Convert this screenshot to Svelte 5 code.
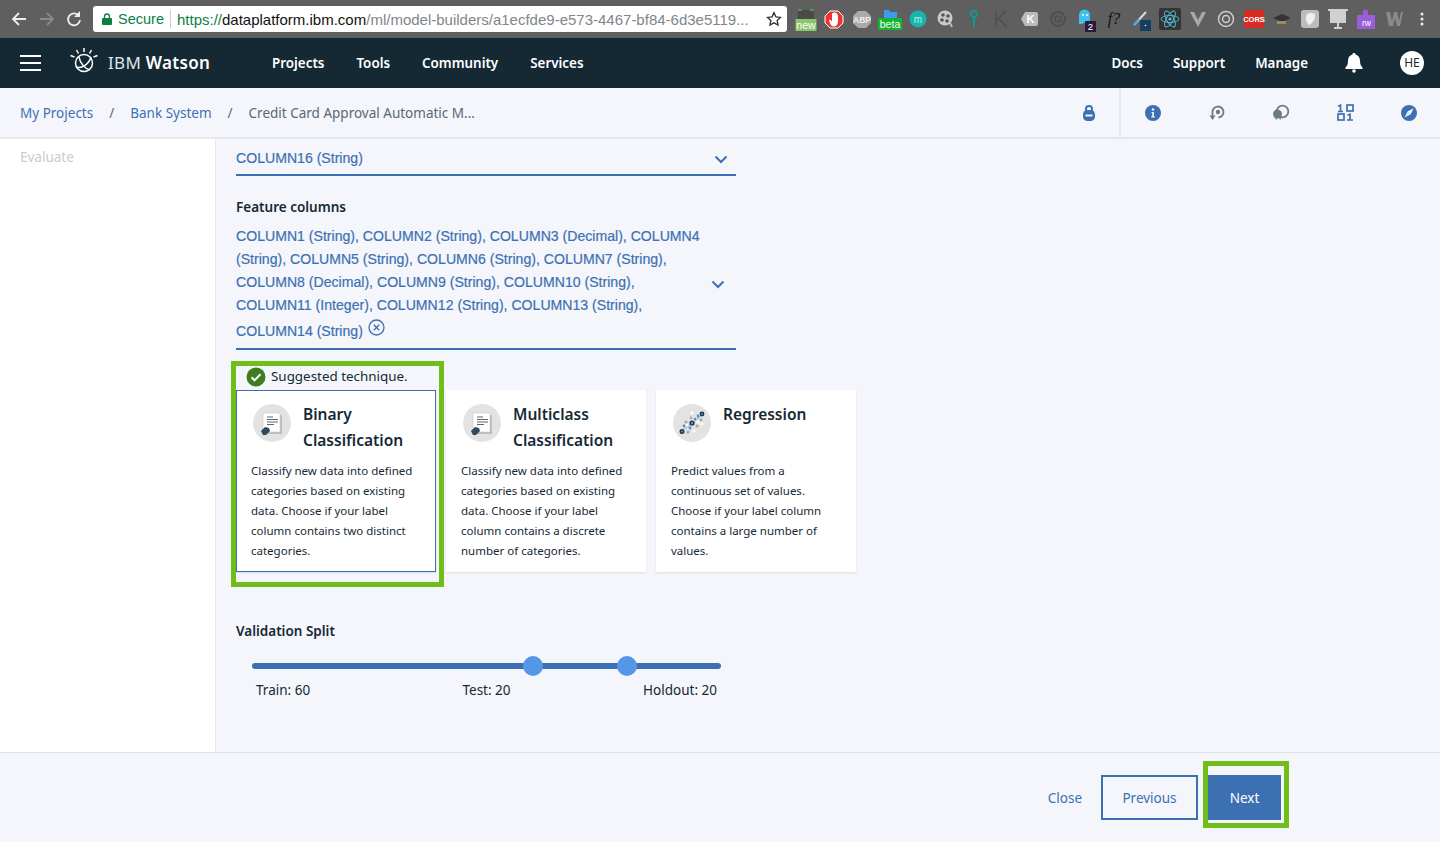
<script>
	const extensions = ["new", "stop", "abp", "beta", "m", "film", "key", "kdark", "k", "swirl", "ghost", "fx", "pen", "react", "v", "target", "cors", "hat", "shield", "screen", "rw", "w", "dots"];
	const navLeft = ["Projects", "Tools", "Community", "Services"];
	const navRight = ["Docs", "Support", "Manage"];
	const features = [
		"COLUMN1 (String), COLUMN2 (String), COLUMN3 (Decimal), COLUMN4",
		"(String), COLUMN5 (String), COLUMN6 (String), COLUMN7 (String),",
		"COLUMN8 (Decimal), COLUMN9 (String), COLUMN10 (String),",
		"COLUMN11 (Integer), COLUMN12 (String), COLUMN13 (String),"
	];
	const cards = [
		{ title: ["Binary", "Classification"], icon: "doc", selected: true, lines: ["Classify new data into defined", "categories based on existing", "data. Choose if your label", "column contains two distinct", "categories."] },
		{ title: ["Multiclass", "Classification"], icon: "doc", lines: ["Classify new data into defined", "categories based on existing", "data. Choose if your label", "column contains a discrete", "number of categories."] },
		{ title: ["Regression"], icon: "scatter", lines: ["Predict values from a", "continuous set of values.", "Choose if your label column", "contains a large number of", "values."] }
	];
</script>

<div class="page">
	<div class="chrome">
		<div class="arrows">
			<svg width="28" height="28" viewBox="0 0 28 28"><path d="M24 14H12M17 8l-6 6 6 6" transform="translate(-2 0)" fill="none" stroke="#eee" stroke-width="1.8"/></svg>
			<svg width="28" height="28" viewBox="0 0 28 28"><path d="M4 14h12M11 8l6 6-6 6" transform="translate(4 0)" fill="none" stroke="#8a8a8a" stroke-width="1.8"/></svg>
			<svg width="28" height="28" viewBox="0 0 28 28"><path d="M19 11a6 6 0 1 0 1 4" fill="none" stroke="#eee" stroke-width="1.8"/><path d="M20 6v6h-6z" fill="#eee"/></svg>
		</div>
		<div class="omnibox">
			<svg class="lock" width="10" height="12" viewBox="0 0 10 12"><path d="M2.5 5V3.5a2.5 2.5 0 0 1 5 0V5" fill="none" stroke="#0b8043" stroke-width="1.3"/><rect y="5" width="10" height="7" rx="1" fill="#0b8043"/></svg>
			<span class="secure">Secure</span>
			<span class="omni-sep"></span>
			<span class="url"><span class="green">https://</span><span class="dark">dataplatform.ibm.com</span>/ml/model-builders/a1ecfde9-e573-4467-bf84-6d3e5119...</span>
			<svg class="star" width="16" height="16" viewBox="0 0 24 24"><path d="M12 2.5l2.9 6.3 6.9.8-5.1 4.7 1.4 6.8-6.1-3.4-6.1 3.4 1.4-6.8L2.2 9.600l6.900-.8z" fill="none" stroke="#333" stroke-width="2"/></svg>
		</div>
		<div class="extensions">
			{#each extensions as e}
				<div class="ext">
					<svg width="28" height="28" viewBox="0 0 28 28">
						{#if e === "new"}
							<path d="M6 5h16v9H6z" fill="#4a4a4a"/><path d="M6 5h4M18 5h4" stroke="#4caf50" stroke-width="1.400"/>
							<rect x="3.500" y="14" width="21" height="12" fill="#8cc66e"/><text x="14" y="24" class="t" font-size="10.500" fill="#fff">new</text>
						{:else if e === "stop"}
							<path d="M10 6h8l5 5v7l-5 5h-8l-5-5v-7z" fill="#e33" stroke="#fff" stroke-width="1"/><path d="M14 7.500c3 0 4 2 4 4v5c0 3-2 5-4 5-3 0-4-3-5-6l1-1 2 2v-8z" fill="#fff"/>
						{:else if e === "abp"}
							<path d="M10 6h8l5 5v7l-5 5h-8l-5-5v-7z" fill="#aaa"/><text x="14" y="18" class="t" font-size="8.500" font-weight="700" fill="#eee">ABP</text>
						{:else if e === "beta"}
							<path d="M8 5h5l1 2h7v6H8z" fill="#3d9be9"/>
							<rect x="2" y="13" width="24" height="12" fill="#12b52c"/><text x="14" y="23" class="t" font-size="10.500" fill="#fff">beta</text>
						{:else if e === "m"}
							<circle cx="14" cy="14" r="8.500" fill="#19b5ac"/><text x="14" y="17.500" class="t" font-size="10" fill="#bdeeea">m</text>
						{:else if e === "film"}
							<circle cx="13" cy="13" r="7.500" fill="#c9c9c9"/><circle cx="11" cy="10" r="1.800" fill="#555"/><circle cx="16" cy="11" r="1.800" fill="#555"/><circle cx="10" cy="15" r="1.800" fill="#555"/><circle cx="15" cy="16" r="1.800" fill="#555"/><path d="M18 18l2 4" stroke="#bbb" stroke-width="2"/>
						{:else if e === "key"}
							<circle cx="14" cy="9" r="3.200" fill="none" stroke="#119a8b" stroke-width="2"/><path d="M14 12v10" stroke="#119a8b" stroke-width="2"/>
						{:else if e === "kdark"}
							<path d="M8 6v16M9 15l9-9M10 13l9 9" fill="none" stroke="#525252" stroke-width="2"/>
						{:else if e === "k"}
							<path d="M9 7h11a2 2 0 0 1 2 2v10a2 2 0 0 1-2 2H9l-4-7z" fill="#bbb"/><text x="14.500" y="18" class="t" font-size="11" font-weight="700" fill="#fff">K</text>
						{:else if e === "swirl"}
							<circle cx="14" cy="14" r="7" fill="none" stroke="#4e4e4e" stroke-width="1.800"/><circle cx="14" cy="14" r="3" fill="none" stroke="#4e4e4e" stroke-width="1.300"/><path d="M7 8l14 12" stroke="#4e4e4e"/>
						{:else if e === "ghost"}
							<path d="M7 19V10a5.500 5.500 0 0 1 11 0v9l-2-1.500-2 1.500-2-1.500-2 1.500z" fill="#3ec3ee"/><circle cx="11" cy="10" r="1" fill="#fff"/><circle cx="15" cy="10" r="1" fill="#fff"/>
							<rect x="13" y="16" width="11" height="11" fill="#2b1a3e"/><text x="18.500" y="25" class="t" font-size="9.500" fill="#fff">2</text>
						{:else if e === "fx"}
							<text x="14" y="19" class="i" font-size="16" fill="#111">f?</text>
						{:else if e === "pen"}
							<path d="M6 20L18 7" stroke="#ddd" stroke-width="2"/><path d="M6 20l5-6" stroke="#4aa3df" stroke-width="2"/>
							<rect x="12" y="15" width="11" height="11" fill="#11415f"/><circle cx="17.500" cy="20.500" r=".8" fill="#fff"/>
						{:else if e === "react"}
							<rect x="3" y="3" width="22" height="22" rx="2" fill="#333"/><g fill="none" stroke="#53c1de" stroke-width=".9"><ellipse cx="14" cy="14" rx="9" ry="3.500"/><ellipse cx="14" cy="14" rx="9" ry="3.500" transform="rotate(60 14 14)"/><ellipse cx="14" cy="14" rx="9" ry="3.500" transform="rotate(120 14 14)"/></g><circle cx="14" cy="14" r="1.600" fill="#53c1de"/>
						{:else if e === "v"}
							<path d="M6 7h4l4 8 4-8h4l-8 15z" fill="#a8a8a8"/>
						{:else if e === "target"}
							<circle cx="14" cy="14" r="7.500" fill="none" stroke="#ccc" stroke-width="1.500"/><circle cx="14" cy="14" r="3.500" fill="none" stroke="#ccc" stroke-width="1.500"/>
						{:else if e === "cors"}
							<rect x="4" y="5" width="20" height="18" rx="2" fill="#d62b22"/><text x="14" y="17" class="t" font-size="7.500" font-weight="700" fill="#fff">CORS</text>
						{:else if e === "hat"}
							<path d="M14 9l9 4-9 4-9-4z" fill="#333"/><path d="M9 16v3h9v-3" fill="#a08a55"/>
						{:else if e === "shield"}
							<rect x="5" y="5" width="18" height="18" rx="3" fill="#bdbdbd"/><path d="M14 8c3 0 5 1 5 1 0 6-2 9-6 11-2-2-4-6-3-9 1-2 2-3 4-3z" fill="#f0f0f0"/>
						{:else if e === "screen"}
							<path d="M6 5h16v13H6z" fill="#d0d0d0"/><path d="M4 5h20" stroke="#d0d0d0" stroke-width="2"/><path d="M14 18v5M10 23h8" stroke="#d0d0d0" stroke-width="2"/>
						{:else if e === "rw"}
							<path d="M5 10h6v-3a2.500 2.500 0 0 1 5 0v3h7v14H5z" fill="#9a5ed8"/><text x="14.500" y="21" class="t" font-size="8.500" fill="#fff">rw</text>
						{:else if e === "w"}
							<path d="M6 7h4l2 9 2-9h3l2 9 2-9h2l-3 14h-3l-2-8-2 8H9z" fill="#8a8a8a"/>
						{:else}
							<circle cx="14" cy="9" r="1.500" fill="#eee"/><circle cx="14" cy="14" r="1.500" fill="#eee"/><circle cx="14" cy="19" r="1.500" fill="#eee"/>
						{/if}
					</svg>
				</div>
			{/each}
		</div>
	</div>

	<header class="topnav">
		<div class="burger"><span></span><span></span><span></span></div>
		<svg class="logo" width="30" height="30" viewBox="0 0 30 30">
			<g fill="none" stroke="#fff" stroke-width="1.500">
				<circle cx="15" cy="17" r="8.500"/>
				<path d="M7 21c6 2 13-3 15-10M10 11c1 6 6 12 11 13"/>
				<path d="M15 2v4M7.500 4l2 3.500M22.500 4l-2 3.500M1.500 9.500l4 1.500M28.500 9.500l-4 1.500"/>
			</g>
		</svg>
		<div class="brand">IBM <b>Watson</b></div>
		<nav class="nav-left">
			{#each navLeft as item}<a href="#top">{item}</a>{/each}
		</nav>
		<nav class="nav-right">
			{#each navRight as item}<a href="#top">{item}</a>{/each}
		</nav>
		<svg class="bell" width="18" height="20" viewBox="0 0 18 20"><path d="M9 0c1 0 1.500.7 1.600 1.500C13.500 2.300 15 4.800 15 8c0 3.500 1 5 2.500 6.500V16H.5v-1.500C2 13 3 11.500 3 8c0-3.200 1.500-5.700 4.400-6.500C7.500.7 8 0 9 0z" fill="#fff"/><circle cx="9" cy="18" r="1.800" fill="#fff"/></svg>
		<div class="avatar">HE</div>
	</header>

	<div class="subnav">
		<div class="crumbs">
			<a href="#top">My Projects</a><span class="slash">/</span>
			<a href="#top">Bank System</a><span class="slash">/</span>
			<span class="current">Credit Card Approval Automatic M...</span>
		</div>
		<div class="tools">
			<div class="tool lockcell">
				<svg width="12" height="16" viewBox="0 0 12 16"><path d="M3 6V4a3 3 0 0 1 6 0v2" fill="none" stroke="#3d70b2" stroke-width="2"/><rect y="5" width="12" height="11" rx="4.500" fill="#3d70b2"/><rect x="2.500" y="9.500" width="7" height="2" fill="#f4f6fb"/></svg>
			</div>
			<div class="tool">
				<svg width="16" height="16" viewBox="0 0 16 16"><circle cx="8" cy="8" r="8" fill="#3d70b2"/><circle cx="8" cy="4.500" r="1.200" fill="#fff"/><path d="M6.500 7h2.300v4.500H10v1H6.200v-1h1.100V8H6.500z" fill="#fff"/></svg>
			</div>
			<div class="tool">
				<svg width="18" height="18" viewBox="0 0 18 18"><path d="M4.500 12V8a5.500 5.500 0 1 1 6 5.500" fill="none" stroke="#6d7a80" stroke-width="1.800"/><circle cx="10" cy="8" r="2.200" fill="#6d7a80"/><path d="M1.500 11.500h6L4.500 16z" fill="#6d7a80"/></svg>
			</div>
			<div class="tool">
				<svg width="18" height="18" viewBox="0 0 18 18"><circle cx="10.500" cy="7.500" r="5.800" fill="none" stroke="#6d7a80" stroke-width="1.800"/><circle cx="5.500" cy="10" r="4.500" fill="#6d7a80"/><path d="M3 13l1 3 2-3M7 13l1 3 2-3" fill="#6d7a80"/></svg>
			</div>
			<div class="tool">
				<svg width="17" height="17" viewBox="0 0 17 17" fill="none" stroke="#3d70b2" stroke-width="1.700"><path d="M1 2.200l2.500-1v6.500M1 7.500h5"/><rect x="10" y="1" width="6" height="6"/><rect x="1" y="10" width="6" height="6"/><path d="M10.500 11.200l2.500-1v6.300M10 16h6"/></svg>
			</div>
			<div class="tool">
				<svg width="16" height="16" viewBox="0 0 16 16"><circle cx="8" cy="8" r="8" fill="#3d70b2"/><path d="M12.500 3.500L9.500 9.500 6.500 6.500z" fill="#fff"/><path d="M3.500 12.500L6.500 6.500l3 3z" fill="#dfe9f5"/></svg>
			</div>
		</div>
	</div>

	<div class="body">
		<aside class="sidebar"><span>Evaluate</span></aside>
		<main class="content">
			<div class="select">
				<span>COLUMN16 (String)</span>
				<svg width="14" height="9" viewBox="0 0 14 9"><path d="M1.500 1.500L7 7l5.500-5.500" fill="none" stroke="#3d70b2" stroke-width="2"/></svg>
			</div>

			<div class="label feature-label">Feature columns</div>
			<div class="multi">
				<div class="multi-text">
					{#each features as line}<div class="fline">{line}</div>{/each}
					<div class="fline last">COLUMN14 (String)
						<svg class="clear" width="17" height="17" viewBox="0 0 17 17"><circle cx="8.500" cy="8.500" r="7.500" fill="none" stroke="#3d70b2" stroke-width="1.300"/><path d="M5.800 5.800l5.400 5.400M11.200 5.800l-5.400 5.400" stroke="#3d70b2" stroke-width="1.300"/></svg>
					</div>
				</div>
				<svg class="multi-chev" width="14" height="9" viewBox="0 0 14 9"><path d="M1.500 1.500L7 7l5.500-5.500" fill="none" stroke="#3d70b2" stroke-width="2"/></svg>
			</div>

			<div class="suggest">
				<svg width="20" height="20" viewBox="0 0 20 20"><circle cx="10" cy="10" r="9.500" fill="#3f7d20"/><path d="M5.500 10.300l3 3 6-6" fill="none" stroke="#fff" stroke-width="2"/></svg>
				<span>Suggested technique.</span>
				<div class="annot"></div>
			</div>

			<div class="cards">
				{#each cards as c}
					<div class="card" class:selected={c.selected}>
						<div class="card-head">
							<div class="badge">
								{#if c.icon === "doc"}
									<svg width="38" height="38" viewBox="0 0 38 38">
										<rect x="12" y="11" width="17" height="19" fill="#bdbdbd"/>
										<rect x="10" y="9" width="17" height="19" fill="#fff" stroke="#c4c8cc" stroke-width=".6"/>
										<path d="M14 13h6M14 15.500h11M14 18h11M14 20.500h7" stroke="#5a6872" stroke-width="1"/>
										<path d="M8 27l4-4 4 1 1 3-4 4-3 0z" fill="#2f4a5c"/>
									</svg>
								{:else}
									<svg width="38" height="38" viewBox="0 0 38 38">
										<path d="M9 27L29 11" stroke="#8d9aa5" stroke-width=".8"/>
										<g fill="#fff"><circle cx="19" cy="9" r="1.600"/><circle cx="25" cy="18" r="1.600"/><circle cx="29" cy="20" r="1.400"/><circle cx="21" cy="27" r="1.600"/><circle cx="14" cy="21" r="1.400"/></g>
										<g fill="#a9a9a9"><circle cx="13" cy="18" r="1.600"/><circle cx="18" cy="14" r="1.400"/><circle cx="24" cy="22" r="1.500"/><circle cx="15" cy="28" r="1.500"/><circle cx="28" cy="16" r="1.400"/></g>
										<g fill="#4a90d9"><circle cx="25" cy="12" r="1.400"/><circle cx="11" cy="22" r="1.400"/><circle cx="17" cy="24" r="1.400"/><circle cx="22" cy="15" r="1.200"/></g>
										<g fill="#4a90d9" stroke="#1d3649" stroke-width="1.400"><circle cx="29" cy="10" r="1.700"/><circle cx="19" cy="19" r="1.900"/><circle cx="9" cy="27.500" r="1.800"/></g>
									</svg>
								{/if}
							</div>
							<h3>{#each c.title as t}<div>{t}</div>{/each}</h3>
						</div>
						<div class="card-text">
							{#each c.lines as l}<div>{l}</div>{/each}
						</div>
					</div>
				{/each}
			</div>

			<div class="label split-label">Validation Split</div>
			<div class="slider">
				<div class="track"></div>
				<div class="thumb" style="left: 271px"></div>
				<div class="thumb" style="left: 365px"></div>
			</div>
			<div class="split-values">
				<span>Train: 60</span><span>Test: 20</span><span class="holdout">Holdout: 20</span>
			</div>
		</main>
	</div>

	<footer class="footer">
		<a class="close" href="#top">Close</a>
		<button class="btn ghost">Previous</button>
		<div class="next-wrap">
			<button class="btn primary">Next</button>
		</div>
	</footer>
</div>

<style>
	:global(body) {
		margin: 0;
		background: #f4f6fb;
	}

	.page {
		height: 842px;
		display: flex;
		flex-direction: column;
		font-family: "Noto Sans", "Open Sans", sans-serif;
		color: #152935;
		overflow: hidden;
	}

	.chrome {
		height: 38px;
		flex: none;
		display: flex;
		align-items: center;
		background: #5f5f5f;
		box-sizing: border-box;
		padding: 0 4px;
	}

	.arrows {
		display: flex;
		width: 89px;
	}

	.omnibox {
		width: 694px;
		height: 26px;
		background: #fff;
		border-radius: 3px;
		display: flex;
		align-items: center;
		font-family: "Liberation Sans", sans-serif;
		font-size: 14.500px;
		box-sizing: border-box;
		padding-left: 9px;
		color: #80868b;
		white-space: nowrap;
	}

	.secure {
		color: #0b8043;
		margin-left: 6px;
	}

	.omni-sep {
		width: 1px;
		height: 18px;
		background: #ccc;
		margin: 0 6px 0 6px;
	}

	.green {
		color: #0b8043;
	}

	.dark {
		color: #111;
	}

	.url {
		width: 587px;
		overflow: hidden;
		font-size: 15px;
	}

	.star {
		margin-left: 2px;
	}

	.extensions {
		display: flex;
		margin-left: 5px;
	}

	.ext {
		width: 28px;
		height: 28px;
	}

	.ext svg {
		display: block;
	}

	.t {
		font-family: "Liberation Sans", sans-serif;
		text-anchor: middle;
	}

	.i {
		font-family: "Liberation Serif", serif;
		font-style: italic;
		text-anchor: middle;
	}

	.topnav {
		height: 50px;
		flex: none;
		background: #152935;
		display: flex;
		align-items: center;
		color: #fff;
		box-sizing: border-box;
		padding-left: 20px;
		padding-bottom: 1px;
	}

	.burger {
		width: 21px;
		display: flex;
		flex-direction: column;
		gap: 5px;
	}

	.burger span {
		height: 2px;
		background: #fff;
	}

	.logo {
		margin-left: 28px;
		margin-top: -3px;
	}

	.brand {
		margin-left: 9px;
		font-size: 17px;
		width: 164px;
		letter-spacing: 0.3px;
		color: #dfe3e6;
		flex: none;
	}

	.brand b {
		font-weight: 600;
		color: #fff;
	}

	.nav-left,
	.nav-right {
		display: flex;
		gap: 32px;
		font-size: 13.400px;
		font-weight: 600;
	}

	.nav-left a,
	.nav-right a {
		color: #fff;
		text-decoration: none;
	}

	.nav-right {
		margin-left: auto;
		gap: 30px;
	}

	.bell {
		margin-left: 37px;
	}

	.avatar {
		margin: 0 16px 0 37px;
		width: 24px;
		height: 24px;
		border-radius: 50%;
		background: #fff;
		color: #152935;
		font-size: 12px;
		display: flex;
		align-items: center;
		justify-content: center;
	}

	.subnav {
		height: 51px;
		flex: none;
		background: #f4f6fb;
		border-bottom: 2px solid #e6e8ec;
		box-sizing: border-box;
		display: flex;
		align-items: center;
		justify-content: space-between;
		padding-left: 20px;
	}

	.crumbs {
		font-size: 13.500px;
		display: flex;
		align-items: center;
	}

	.crumbs a {
		color: #3d70b2;
		text-decoration: none;
	}

	.slash {
		margin: 0 16px;
		color: #5a6872;
	}

	.current {
		color: #5a6872;
	}

	.tools {
		display: flex;
		height: 100%;
		margin-right: -1px;
	}

	.tool {
		width: 64px;
		display: flex;
		align-items: center;
		justify-content: center;
	}

	.lockcell {
		border-right: 2px solid #e6e8ec;
		box-sizing: border-box;
		padding-left: 2px;
	}

	.body {
		flex: 1;
		display: flex;
		min-height: 0;
	}

	.sidebar {
		width: 216px;
		flex: none;
		background: #fff;
		border-right: 1px solid #e6e8ec;
		box-sizing: border-box;
		padding: 9px 20px;
		font-size: 13.500px;
		color: #c7cdd1;
	}

	.content {
		flex: 1;
		padding-left: 20px;
		min-width: 0;
	}

	.select {
		width: 500px;
		height: 37px;
		box-sizing: border-box;
		border-bottom: 2px solid #3d70b2;
		display: flex;
		align-items: center;
		justify-content: space-between;
		padding: 2px 8px 0 0;
		font-family: "Liberation Sans", sans-serif;
		font-size: 14.100px;
		-webkit-text-stroke: 0.2px #3d70b2;
		color: #3d70b2;
	}

	.select svg {
		margin-top: 4px;
	}

	.label {
		font-size: 13.500px;
		font-weight: 600;
		color: #152935;
		line-height: 20px;
	}

	.feature-label {
		margin-top: 21px;
	}

	.multi {
		width: 500px;
		height: 125px;
		box-sizing: border-box;
		border-bottom: 2px solid #3d70b2;
		margin-top: 8px;
		font-family: "Liberation Sans", sans-serif;
		font-size: 14.100px;
		-webkit-text-stroke: 0.2px #3d70b2;
		color: #3d70b2;
		display: flex;
		align-items: center;
		justify-content: space-between;
		padding-right: 11px;
	}

	.multi-text {
		align-self: flex-start;
	}

	.multi-chev {
		margin-top: -4px;
	}

	.fline {
		height: 23px;
		line-height: 23px;
		white-space: nowrap;
	}

	.last {
		margin-top: 2px;
		line-height: 24px;
		height: 24px;
	}

	.clear {
		margin-left: 1px;
		vertical-align: 0;
	}

	.suggest {
		position: relative;
		height: 40px;
		box-sizing: border-box;
		padding: 13px 0 0 10px;
		display: flex;
		align-items: center;
		gap: 5px;
		font-size: 13.400px;
		color: #152935;
	}

	.suggest span {
		line-height: 1;
	}

	.annot {
		position: absolute;
		left: -5px;
		top: 11px;
		width: 213px;
		height: 226px;
		box-sizing: border-box;
		border: 5px solid #6fbe1a;
		pointer-events: none;
		z-index: 2;
	}

	.cards {
		display: flex;
		gap: 10px;
	}

	.card {
		width: 200px;
		height: 182px;
		box-sizing: border-box;
		background: #fff;
		box-shadow: 0 1px 2px rgba(0, 0, 0, 0.1);
		padding: 13px 15px 0;
	}

	.card.selected {
		border: 1px solid #3d70b2;
		padding: 12px 14px 0;
	}

	.card-head {
		display: flex;
		gap: 12px;
		height: 58px;
	}

	.badge {
		width: 38px;
		height: 38px;
		border-radius: 50%;
		background: #e3e3e3;
		flex: none;
		margin: 1px 0 0 2px;
	}

	.badge svg {
		display: block;
	}

	h3 {
		margin: -2px 0 0;
		font-size: 15.500px;
		line-height: 26px;
		font-weight: 600;
		color: #152935;
		white-space: nowrap;
	}

	.card-text {
		font-size: 11.500px;
		line-height: 20px;
		color: #152935;
		white-space: nowrap;
	}

	.split-label {
		margin-top: 49px;
	}

	.slider {
		position: relative;
		width: 469px;
		height: 20px;
		margin: 15px 0 0 16px;
	}

	.track {
		position: absolute;
		left: 0;
		right: 0;
		top: 7px;
		height: 6px;
		border-radius: 3px;
		background: #3d70b2;
	}

	.thumb {
		position: absolute;
		top: 0;
		width: 20px;
		height: 20px;
		border-radius: 50%;
		background: #5596e6;
	}

	.split-values {
		width: 461px;
		margin: 4px 0 0 20px;
		display: grid;
		grid-template-columns: 1fr auto 1fr;
		font-size: 13.500px;
		line-height: 20px;
		color: #152935;
	}

	.holdout {
		text-align: right;
	}

	.footer {
		height: 90px;
		flex: none;
		background: #f4f6fb;
		border-top: 1px solid #dfe3e6;
		box-sizing: border-box;
		display: flex;
		align-items: center;
		padding-right: 151px;
		justify-content: flex-end;
		font-size: 13.500px;
	}

	.close {
		color: #3d70b2;
		text-decoration: none;
		margin-right: 19px;
	}

	.btn {
		font-family: inherit;
		font-size: 13.500px;
		height: 45px;
		box-sizing: border-box;
		border: 2px solid #3d70b2;
		padding: 0;
	}

	.ghost {
		width: 97px;
		background: transparent;
		color: #3d70b2;
	}

	.next-wrap {
		margin: -6px 0 0 5px;
		border: 5px solid #6fbe1a;
		padding: 9px 3px 3px 0;
		background: #f4f6fb;
		width: 86px;
		height: 67px;
		box-sizing: border-box;
	}

	.primary {
		width: 73px;
		background: #3d70b2;
		color: #fff;
		display: block;
	}
</style>
